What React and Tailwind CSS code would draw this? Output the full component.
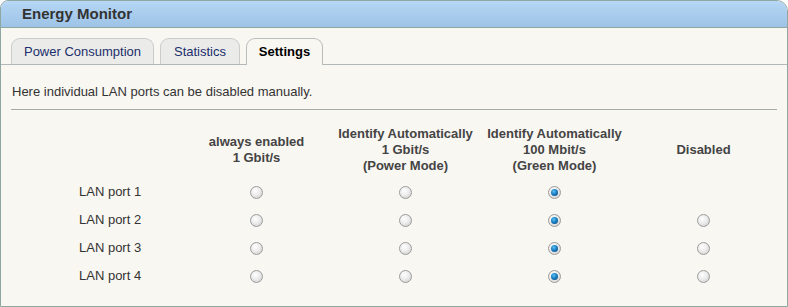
import React, { useState } from "react";

const columns = [
  ["always enabled", "1 Gbit/s"],
  ["Identify Automatically", "1 Gbit/s", "(Power Mode)"],
  ["Identify Automatically", "100 Mbit/s", "(Green Mode)"],
  ["Disabled"],
];

const ports = [
  { name: "LAN port 1", canDisable: false },
  { name: "LAN port 2", canDisable: true },
  { name: "LAN port 3", canDisable: true },
  { name: "LAN port 4", canDisable: true },
];

function Radio({ checked, onClick }) {
  return (
    <button
      onClick={onClick}
      className="w-[13px] h-[13px] rounded-full border border-[#9b9b9b] bg-[radial-gradient(circle_at_40%_35%,#ffffff_0%,#ececec_45%,#c9c9c9_100%)] flex items-center justify-center p-0"
    >
      {checked && (
        <span className="w-[7px] h-[7px] rounded-full bg-[radial-gradient(circle_at_40%_35%,#5cc0f2_0%,#1a7fc4_45%,#0a3f70_100%)]" />
      )}
    </button>
  );
}

function App() {
  const [tab, setTab] = useState("Settings");
  const [modes, setModes] = useState([2, 2, 2, 2]);

  const tabs = [
    { label: "Power Consumption", w: "w-[143px]" },
    { label: "Statistics", w: "w-[80px]" },
    { label: "Settings", w: "w-[77px]" },
  ];

  // pick mode for a port
  const choose = (row, col) => {
    setModes((prev) => prev.map((m, i) => (i === row ? col : m)));
  };

  return (
    <div
      className="w-[788px] h-[307px] bg-[#f9f7f2] border border-[#8fa7a1] rounded-tl-[8px] rounded-tr-[11px] overflow-hidden text-[#333]"
      style={{ fontFamily: '"Liberation Sans", Arial, sans-serif' }}
    >
      {/* Title bar */}
      <div className="h-[27px] bg-gradient-to-b from-[#b6d7f5] to-[#9dc3e6] border-b border-[#8fa7a1] flex items-center pl-[21px]">
        <h1 className="text-[15px] font-bold text-[#333]">Energy Monitor</h1>
      </div>

      {/* Tabs */}
      <div className="flex gap-[6px] pt-[10px] px-[10px] border-b border-[#b2b8b7]">
        {tabs.map((t) => {
          const active = t.label === tab;
          return (
            <button
              key={t.label}
              onClick={() => setTab(t.label)}
              className={
                active
                  ? `${t.w} h-[27px] -mb-px rounded-t-[9px] border border-b-0 border-[#b9bebd] bg-[#f9f7f2] text-[13px] font-bold text-black`
                  : `${t.w} h-[26px] rounded-t-[9px] border border-b-0 border-[#c9cccb] bg-[#ebebea] text-[13px] text-[#1b2f6b]`
              }
            >
              {t.label}
            </button>
          );
        })}
      </div>

      <div className="px-[10px]">
        <p className="text-[13px] leading-[15px] pt-[19px] pb-[10px] border-b border-[#a4aba9] pl-px">
          Here individual LAN ports can be disabled manually.
        </p>

        <div className="grid grid-cols-[171px_149px_149px_149px_149px] pt-[11px]">
          {/* Header */}
          <div className="h-[57px]" />
          {columns.map((lines, i) => (
            <div
              key={i}
              className="h-[57px] flex flex-col items-center justify-center text-[13px] leading-[16px] font-bold text-[#444]"
            >
              {lines.map((l) => (
                <span key={l}>{l}</span>
              ))}
            </div>
          ))}

          {/* Rows */}
          {ports.map((p, r) => (
            <React.Fragment key={p.name}>
              <div className="h-[28px] flex items-center pl-[68px] text-[13px]">
                {p.name}
              </div>
              {columns.map((_, c) => (
                <div key={c} className="h-[28px] flex items-center justify-center">
                  {(c < 3 || p.canDisable) && (
                    <Radio checked={modes[r] === c} onClick={() => choose(r, c)} />
                  )}
                </div>
              ))}
            </React.Fragment>
          ))}
        </div>
      </div>
    </div>
  );
}

export default App;
